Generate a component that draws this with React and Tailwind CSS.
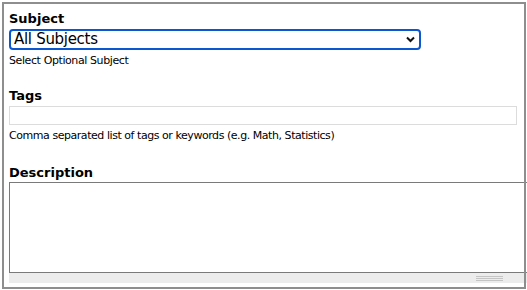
import React from "react";

export default function App() {
  const font = { fontFamily: '"DejaVu Sans", Verdana, sans-serif' };
  return (
    <div className="w-[527px] h-[290px] bg-white pt-[2px] pl-[2px] overflow-hidden" style={font}>
      <div className="w-[524px] h-[287px] outline-2 outline-[#8e8e8e] -outline-offset-2 pl-[7px] pt-[8px] text-black">
        <div className="text-[13px] font-bold leading-[18px]">Subject</div>
        <div className="mt-[1px] w-[412px] h-[21px] border-2 border-[#0b57d0] rounded-[4px] flex items-center justify-between pl-[3px] pr-[3px]">
          <span className="text-[15px] leading-[17px] tracking-[-0.3px]">All Subjects</span>
          <svg width="9" height="7" viewBox="0 0 9 7" className="mr-[1px]">
            <path d="M1 1.5 L4.5 5 L8 1.5" fill="none" stroke="#111" strokeWidth="2" />
          </svg>
        </div>
        <div className="mt-[4px] text-[11px] leading-[13px] tracking-[-0.4px]">Select Optional Subject</div>
        <div className="mt-[20px] text-[13px] font-bold leading-[18px]">Tags</div>
        <div className="mt-[1px] w-[508px] h-[19px] border border-[#dcdcdc]"></div>
        <div className="mt-[4px] text-[11px] leading-[13px] tracking-[-0.45px]">Comma separated list of tags or keywords (e.g. Math, Statistics)</div>
        <div className="mt-[22px] text-[13px] font-bold leading-[18px]">Description</div>
        <div className="w-[530px] h-[91px] border border-[#7a7a7a] bg-transparent"></div>
        <div className="w-[530px] h-[10px] bg-[#ececec] pl-[467px] flex items-center">
          <div className="flex flex-col gap-[1px]">
            <div className="w-[27px] h-px bg-[#c4c4c4]"></div>
            <div className="w-[27px] h-px bg-[#c4c4c4]"></div>
            <div className="w-[27px] h-px bg-[#c4c4c4]"></div>
          </div>
        </div>
      </div>
    </div>
  );
}
